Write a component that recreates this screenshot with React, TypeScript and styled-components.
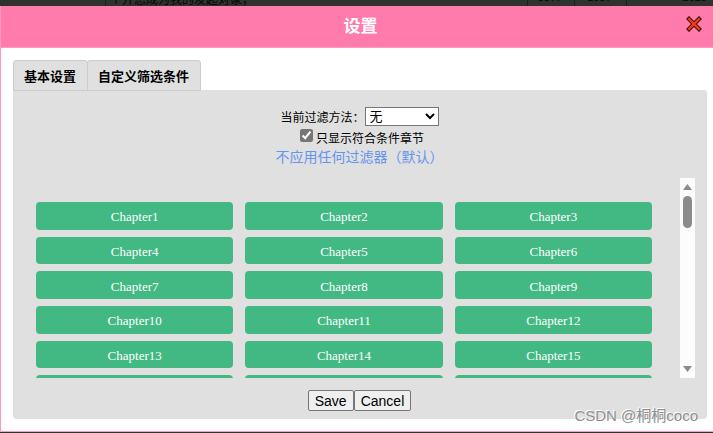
import React, { useState } from "react";
import styled, { createGlobalStyle } from "styled-components";

const GlobalStyle = createGlobalStyle`
  *, *::before, *::after { box-sizing: border-box; }
  html, body, #root { height: 100%; }
  body {
    margin: 0;
    overflow: hidden;
    background: #30322f;
    color: #000;
    font: 12px/16px "Liberation Sans", "Noto Sans CJK SC", sans-serif;
  }
`;

const Page = styled.div`
  display: flex;
  flex-direction: column;
  height: 100%;
`;

const BackdropRow = styled.div`
  display: grid;
  grid-template-columns: 105px 1fr 47px 52px 87px;
  flex: 0 0 6px;
  overflow: hidden;
`;

const BackdropCell = styled.div<{ $align?: string; $numeric?: boolean }>`
  display: flex;
  align-items: flex-end;
  justify-content: ${(p) => p.$align ?? "center"};
  height: 6px;
  padding: 0 6px ${(p) => (p.$numeric ? 3 : 0)}px 4px;
  overflow: hidden;
  white-space: nowrap;
  color: #050505;
  font-size: ${(p) => (p.$numeric ? 11 : 12)}px;
  line-height: 12px;

  & + & { border-left: 1px solid #062d0c; }
`;

const Dialog = styled.section`
  display: flex;
  flex: 1;
  flex-direction: column;
  min-height: 0;
  margin-bottom: 1px;
  background: #fff;
  border: solid #ff99bf;
  border-width: 0 0 1px 1px;
`;

const Header = styled.header`
  display: grid;
  grid-template-columns: 32px 1fr 32px;
  align-items: center;
  height: 42px;
  padding-right: 3px;
  background: #ff7bac;
  border-bottom: 1px solid #ff99bf;
`;

const Title = styled.h1`
  grid-column: 2;
  margin: 0;
  padding-left: 10px;
  color: #fff;
  font-size: 17px;
  line-height: 24px;
  text-align: center;
`;

const CloseButton = styled.button`
  display: grid;
  place-items: center;
  width: 32px;
  height: 32px;
  margin-bottom: 5px;
  padding: 0;
  background: none;
  border: 0;
  cursor: pointer;
`;

const Body = styled.div`
  display: flex;
  flex: 1;
  flex-direction: column;
  min-height: 0;
  padding: 12px 6px 12px 12px;
`;

const TabList = styled.div`
  display: flex;
`;

const Tab = styled.button`
  height: 31px;
  margin-bottom: -1px;
  padding: 2px 11px 0 10px;
  background: #e0e0e0;
  border: 1px solid #ccc;
  border-radius: 3px 3px 0 0;
  color: #000;
  font: bold 13px/20px "Liberation Sans", "Noto Sans CJK SC", sans-serif;
  cursor: pointer;
  z-index: 1;

  & + & { margin-left: -1px; }
`;

const Panel = styled.form`
  display: flex;
  flex: 1;
  flex-direction: column;
  min-height: 0;
  padding: 16px 12px 8px 23px;
  background: #e0e0e0;
  border-radius: 0 3px 4px 4px;
`;

const Options = styled.div`
  display: flex;
  flex-direction: column;
  align-items: center;
  padding-right: 12px;
`;

const OptionRow = styled.div`
  display: flex;
  align-items: center;
  height: 20px;
`;

const CheckRow = styled(OptionRow)`
  height: 22px;
  padding-left: 5px;
`;

const Label = styled.label`
  padding-top: 3px;
`;

const Select = styled.select`
  width: 74px;
  height: 19px;
  padding: 0;
  background: #fff;
  border: 1px solid #767676;
  border-radius: 0;
  color: #000;
  font: 13px "Liberation Sans", "Noto Sans CJK SC", sans-serif;
`;

const Checkbox = styled.input`
  width: 13px;
  height: 13px;
  margin: 0 3px 4px 0;
  accent-color: #767676;
`;

const Hint = styled.p`
  margin: 0;
  color: #6495ed;
  font-size: 14px;
  line-height: 18px;
`;

const Chapters = styled.div`
  display: flex;
  flex: 1;
  min-height: 0;
  margin-top: 12px;
`;

const ScrollArea = styled.div`
  flex: 1;
  overflow-y: scroll;
  scrollbar-width: none;
  padding: 24px 28px 24px 0;
`;

const ChapterGrid = styled.div`
  display: grid;
  grid-template-columns: repeat(3, 1fr);
  grid-auto-rows: 1fr;
  gap: 7px 12px;
  height: 1033px;
`;

const ChapterButton = styled.button`
  min-width: 0;
  padding: 3px 0 0;
  background: #42b883;
  border: 0;
  border-radius: 4px;
  color: #fff;
  font: 13px/16px "Liberation Serif", serif;
  cursor: pointer;
`;

const ScrollTrack = styled.div`
  display: flex;
  flex-direction: column;
  align-items: center;
  justify-content: space-between;
  width: 15px;
  padding: 6px 0;
  background: #fcfcfc;
`;

const ThumbLane = styled.div`
  flex: 1;
  width: 9px;
  margin: 6px 0;
`;

const Thumb = styled.div`
  height: 32px;
  background: #8b8b8b;
  border-radius: 5px;
`;

const Actions = styled.div`
  display: flex;
  justify-content: center;
  padding: 12px 0 0;
  margin-right: 12px;
`;

const ActionButton = styled.button`
  height: 21px;
  padding: 0 6px;
  background: #efefef;
  border: 1px solid #767676;
  border-radius: 2px;
  color: #000;
  font: 14px/16px "Liberation Sans", sans-serif;
`;

const Watermark = styled.span`
  position: absolute;
  right: 15px;
  bottom: 6px;
  color: #909090;
  font: 15px/22px "Liberation Sans", "Noto Sans CJK SC", sans-serif;
  text-shadow: -1px -1px 0 #fff;
  pointer-events: none;
`;

const THUMB_TRAVEL = 132;
const chapters = Array.from({ length: 90 }, (_, i) => `Chapter${i + 1}`);

function CloseIcon() {
  return (
    <svg width="16" height="16" viewBox="0 0 16 16" aria-hidden="true">
      <path d="M3 3 L13 13 M13 3 L3 13" stroke="#4a1515" strokeWidth="4.4" strokeLinecap="square" strokeLinejoin="round" />
      <path d="M3 3 L13 13 M13 3 L3 13" stroke="#f63b15" strokeWidth="2.2" strokeLinecap="round" />
    </svg>
  );
}

function Arrow({ down = false }: { down?: boolean }) {
  return (
    <svg width="9" height="6" viewBox="0 0 9 6" aria-hidden="true">
      <path d={down ? "M0 0H9L4.5 6Z" : "M0 6H9L4.5 0Z"} fill="#8b8b8b" />
    </svg>
  );
}

export default function App() {
  const [progress, setProgress] = useState(0);

  const onScroll = (e: React.UIEvent<HTMLDivElement>) => {
    const el = e.currentTarget;
    setProgress(el.scrollTop / (el.scrollHeight - el.clientHeight));
  };

  return (
    <Page>
      <GlobalStyle />
      <BackdropRow>
        <BackdropCell />
        <BackdropCell $align="flex-start">个并您成为我的发起对象，</BackdropCell>
        <BackdropCell $numeric>3377</BackdropCell>
        <BackdropCell $numeric>1037</BackdropCell>
        <BackdropCell $numeric $align="flex-end">2023</BackdropCell>
      </BackdropRow>
      <Dialog role="dialog" aria-labelledby="dialog-title">
        <Header>
          <Title id="dialog-title">设置</Title>
          <CloseButton type="button" aria-label="关闭">
            <CloseIcon />
          </CloseButton>
        </Header>
        <Body>
          <TabList role="tablist">
            <Tab type="button" role="tab" aria-selected="false">基本设置</Tab>
            <Tab type="button" role="tab" aria-selected="true">自定义筛选条件</Tab>
          </TabList>
          <Panel onSubmit={(e) => e.preventDefault()}>
            <Options>
              <OptionRow>
                <Label htmlFor="filter">当前过滤方法：</Label>
                <Select id="filter" defaultValue="none">
                  <option value="none">无</option>
                </Select>
              </OptionRow>
              <CheckRow>
                <Checkbox id="matching" type="checkbox" defaultChecked />
                <Label htmlFor="matching">只显示符合条件章节</Label>
              </CheckRow>
              <Hint>不应用任何过滤器（默认）</Hint>
            </Options>
            <Chapters>
              <ScrollArea onScroll={onScroll}>
                <ChapterGrid>
                  {chapters.map((name) => (
                    <ChapterButton key={name} type="button">{name}</ChapterButton>
                  ))}
                </ChapterGrid>
              </ScrollArea>
              <ScrollTrack>
                <Arrow />
                <ThumbLane>
                  <Thumb style={{ transform: `translateY(${progress * THUMB_TRAVEL}px)` }} />
                </ThumbLane>
                <Arrow down />
              </ScrollTrack>
            </Chapters>
            <Actions>
              <ActionButton type="submit">Save</ActionButton>
              <ActionButton type="button">Cancel</ActionButton>
            </Actions>
          </Panel>
        </Body>
      </Dialog>
      <Watermark>CSDN @桐桐coco</Watermark>
    </Page>
  );
}
